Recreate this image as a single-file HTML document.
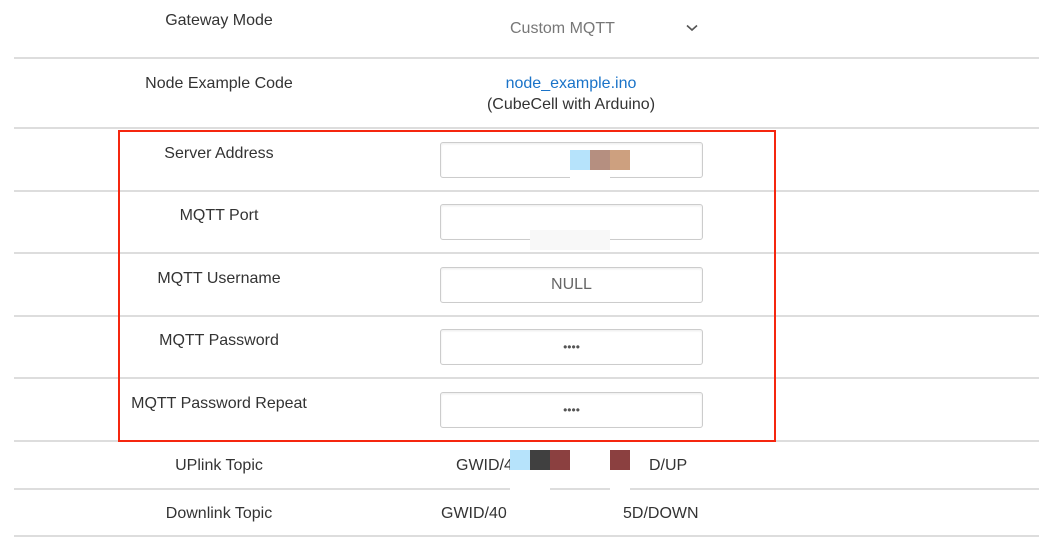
<!DOCTYPE html><html><head><style>
body{margin:0;width:1039px;height:548px;background:#fff;font-family:"Liberation Sans",sans-serif;font-size:16px;color:#333;position:relative;overflow:hidden}
.a{position:absolute}
.l{position:absolute;left:14px;right:0;height:2px;background:#ddd}
.lab{position:absolute;width:400px;left:19px;text-align:center}
.in{position:absolute;left:440px;width:261px;height:34px;border:1px solid #ccc;border-radius:3px;box-shadow:inset 0 1px 2px rgba(0,0,0,.08);text-align:center;line-height:34px;color:#666}
</style></head><body>
<div class="lab" style="top:12px">Gateway Mode</div>
<div class="a" style="left:510px;top:20px;color:#777">Custom MQTT</div>
<svg class="a" style="left:686px;top:24px" width="12" height="8"><path d="M1 1.5L6 6L11 1.5" fill="none" stroke="#555" stroke-width="1.6"/></svg>
<div class="l" style="top:57px"></div>
<div class="lab" style="top:75px">Node Example Code</div>
<div class="a" style="left:371px;width:400px;text-align:center;top:75px;color:#1a73c8">node_example.ino</div>
<div class="a" style="left:371px;width:400px;text-align:center;top:96px">(CubeCell with Arduino)</div>
<div class="l" style="top:127px"></div>
<div class="lab" style="top:145px">Server Address</div>
<div class="in" style="top:142px"></div>
<div class="a" style="left:570px;top:150px;width:20px;height:20px;background:#b6e3fb"></div>
<div class="a" style="left:590px;top:150px;width:20px;height:20px;background:#b58f80"></div>
<div class="a" style="left:610px;top:150px;width:20px;height:20px;background:#cda07f"></div>
<div class="a" style="left:570px;top:170px;width:40px;height:12px;background:#fff"></div>
<div class="l" style="top:190px"></div>
<div class="lab" style="top:207px">MQTT Port</div>
<div class="in" style="top:204px"></div>
<div class="a" style="left:530px;top:230px;width:80px;height:20px;background:#f8f8f8"></div>
<div class="l" style="top:252px"></div>
<div class="lab" style="top:270px">MQTT Username</div>
<div class="in" style="top:267px">NULL</div>
<div class="l" style="top:315px"></div>
<div class="lab" style="top:332px">MQTT Password</div>
<div class="in" style="top:329px;font-size:12px;color:#555">••••</div>
<div class="l" style="top:377px"></div>
<div class="lab" style="top:395px">MQTT Password Repeat</div>
<div class="in" style="top:392px;font-size:12px;color:#555">••••</div>
<div class="l" style="top:440px"></div>
<div class="a" style="left:118px;top:130px;width:654px;height:308px;border:2px solid #f5260f"></div>
<div class="lab" style="top:457px">UPlink Topic</div>
<div class="a" style="left:456px;top:457px">GWID/4</div>
<div class="a" style="left:649px;top:457px">D/UP</div>
<div class="a" style="left:510px;top:450px;width:20px;height:20px;background:#b6e3fb"></div>
<div class="a" style="left:530px;top:450px;width:20px;height:20px;background:#404040"></div>
<div class="a" style="left:550px;top:450px;width:20px;height:20px;background:#8b4040"></div>
<div class="a" style="left:610px;top:450px;width:20px;height:20px;background:#8b4040"></div>
<div class="l" style="top:488px"></div>
<div class="a" style="left:510px;top:470px;width:40px;height:50px;background:#fff"></div>
<div class="a" style="left:610px;top:470px;width:20px;height:20px;background:#fff"></div>
<div class="lab" style="top:505px">Downlink Topic</div>
<div class="a" style="left:441px;top:505px">GWID/40</div>
<div class="a" style="left:623px;top:505px">5D/DOWN</div>
<div class="l" style="top:535px"></div>
</body></html>
